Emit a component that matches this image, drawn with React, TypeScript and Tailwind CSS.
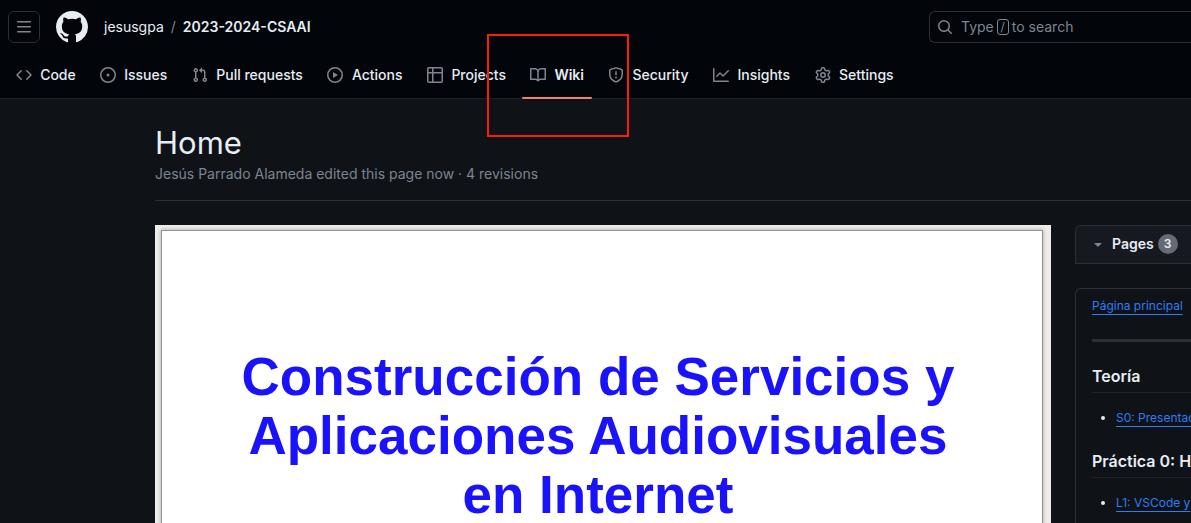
import type { ReactNode } from "react";

const icons = {
  menu: "M1 2.75A.75.75 0 0 1 1.75 2h12.5a.75.75 0 0 1 0 1.5H1.75A.75.75 0 0 1 1 2.75Zm0 5A.75.75 0 0 1 1.75 7h12.5a.75.75 0 0 1 0 1.5H1.75A.75.75 0 0 1 1 7.75ZM1.75 12h12.5a.75.75 0 0 1 0 1.5H1.75a.75.75 0 0 1 0-1.5Z",
  github:
    "M8 0c4.42 0 8 3.58 8 8a8.013 8.013 0 0 1-5.45 7.59c-.4.08-.55-.17-.55-.38 0-.27.01-1.13.01-2.2 0-.75-.25-1.23-.54-1.48 1.78-.2 3.65-.88 3.65-3.95 0-.88-.31-1.59-.82-2.15.08-.2.36-1.02-.08-2.12 0 0-.67-.22-2.2.82-.64-.18-1.32-.27-2-.27-.68 0-1.36.09-2 .27-1.53-1.03-2.2-.82-2.2-.82-.44 1.1-.16 1.92-.08 2.12-.51.56-.82 1.28-.82 2.15 0 3.06 1.86 3.75 3.64 3.95-.23.2-.44.55-.51 1.07-.46.21-1.61.55-2.33-.66-.15-.24-.6-.83-1.23-.82-.67.01-.27.38.01.53.34.19.73.9.82 1.13.16.45.68 1.31 2.69.94 0 .67.01 1.3.01 1.49 0 .21-.15.45-.55.38A7.995 7.995 0 0 1 0 8c0-4.42 3.58-8 8-8Z",
  search:
    "M10.68 11.74a6 6 0 0 1-7.922-8.982 6 6 0 0 1 8.982 7.922l3.04 3.04a.749.749 0 0 1-.326 1.275.749.749 0 0 1-.734-.215ZM11.5 7a4.499 4.499 0 1 0-8.997 0A4.499 4.499 0 0 0 11.5 7Z",
  code: "m11.28 3.22 4.25 4.25a.75.75 0 0 1 0 1.06l-4.25 4.25a.749.749 0 0 1-1.275-.326.749.749 0 0 1 .215-.734L13.94 8l-3.72-3.72a.749.749 0 0 1 .326-1.275.749.749 0 0 1 .734.215Zm-6.56 0a.751.751 0 0 1 1.042.018.751.751 0 0 1 .018 1.042L2.06 8l3.72 3.72a.749.749 0 0 1-.326 1.275.749.749 0 0 1-.734-.215L.47 8.53a.75.75 0 0 1 0-1.06Z",
  issue:
    "M8 9.5a1.5 1.5 0 1 0 0-3 1.5 1.5 0 0 0 0 3ZM8 0a8 8 0 1 1 0 16A8 8 0 0 1 8 0ZM1.5 8a6.5 6.5 0 1 0 13 0 6.5 6.5 0 0 0-13 0Z",
  pull: "M1.5 3.25a2.25 2.25 0 1 1 3 2.122v5.256a2.251 2.251 0 1 1-1.5 0V5.372A2.25 2.25 0 0 1 1.5 3.25Zm5.677-.177L9.573.677A.25.25 0 0 1 10 .854V2.5h1A2.5 2.5 0 0 1 13.5 5v5.628a2.251 2.251 0 1 1-1.5 0V5a1 1 0 0 0-1-1h-1v1.646a.25.25 0 0 1-.427.177L7.177 3.427a.25.25 0 0 1 0-.354ZM3.75 2.5a.75.75 0 1 0 0 1.5.75.75 0 0 0 0-1.5Zm0 9.5a.75.75 0 1 0 0 1.5.75.75 0 0 0 0-1.5Zm8.25.75a.75.75 0 1 0 1.5 0 .75.75 0 0 0-1.5 0Z",
  play: "M8 0a8 8 0 1 1 0 16A8 8 0 0 1 8 0ZM1.5 8a6.5 6.5 0 1 0 13 0 6.5 6.5 0 0 0-13 0Zm4.879-2.773 4.264 2.559a.25.25 0 0 1 0 .428l-4.264 2.559A.25.25 0 0 1 6 10.559V5.442a.25.25 0 0 1 .379-.215Z",
  table:
    "M0 1.75C0 .784.784 0 1.75 0h12.5C15.216 0 16 .784 16 1.75v12.5A1.75 1.75 0 0 1 14.25 16H1.75A1.75 1.75 0 0 1 0 14.25ZM6.5 6.5v8h7.75a.25.25 0 0 0 .25-.25V6.5Zm8-1.5V1.75a.25.25 0 0 0-.25-.25H6.5V5Zm-13 1.5v7.75c0 .138.112.25.25.25H5v-8ZM5 5V1.5H1.75a.25.25 0 0 0-.25.25V5Z",
  book: "M0 1.75A.75.75 0 0 1 .75 1h4.253c1.227 0 2.317.59 3 1.501A3.743 3.743 0 0 1 11.006 1h4.245a.75.75 0 0 1 .75.75v10.5a.75.75 0 0 1-.75.75h-4.507a2.25 2.25 0 0 0-1.591.659l-.622.621a.75.75 0 0 1-1.06 0l-.622-.621A2.25 2.25 0 0 0 5.258 13H.75a.75.75 0 0 1-.75-.75Zm7.251 10.324.004-5.073-.002-2.253A2.25 2.25 0 0 0 5.003 2.5H1.5v9h3.757a3.75 3.75 0 0 1 1.994.574ZM8.755 4.75l-.004 7.322a3.752 3.752 0 0 1 1.992-.572H14.5v-9h-3.495a2.25 2.25 0 0 0-2.25 2.25Z",
  shield:
    "M7.467.133a1.748 1.748 0 0 1 1.066 0l5.25 1.68A1.75 1.75 0 0 1 15 3.48V7c0 1.566-.32 3.182-1.303 4.682-.983 1.498-2.585 2.813-5.032 3.855a1.697 1.697 0 0 1-1.33 0c-2.447-1.042-4.049-2.357-5.032-3.855C1.32 10.182 1 8.566 1 7V3.48a1.75 1.75 0 0 1 1.217-1.667Zm.61 1.429a.25.25 0 0 0-.153 0l-5.25 1.68a.25.25 0 0 0-.174.238V7c0 1.358.275 2.666 1.057 3.86.784 1.194 2.121 2.34 4.366 3.297a.196.196 0 0 0 .154 0c2.245-.956 3.582-2.104 4.366-3.298C13.225 9.666 13.5 8.36 13.5 7V3.48a.251.251 0 0 0-.174-.237l-5.25-1.68ZM8.75 4.75v3a.75.75 0 0 1-1.5 0v-3a.75.75 0 0 1 1.5 0ZM9 10.5a1 1 0 1 1-2 0 1 1 0 0 1 2 0Z",
  graph:
    "M1.5 1.75V13.5h13.75a.75.75 0 0 1 0 1.5H.75a.75.75 0 0 1-.75-.75V1.75a.75.75 0 0 1 1.5 0Zm14.28 2.53-5.25 5.25a.75.75 0 0 1-1.06 0L7 7.06 4.28 9.78a.751.751 0 0 1-1.042-.018.751.751 0 0 1-.018-1.042l3.25-3.25a.75.75 0 0 1 1.06 0L10 7.94l4.72-4.72a.751.751 0 0 1 1.042.018.751.751 0 0 1 .018 1.042Z",
  gear: "M8 0a8.2 8.2 0 0 1 .701.031C9.444.095 9.99.645 10.16 1.29l.288 1.107c.018.066.079.158.212.224.231.114.454.243.668.386.123.082.233.09.299.071l1.103-.303c.644-.176 1.392.021 1.82.63.27.385.506.792.704 1.218.315.675.111 1.422-.364 1.891l-.814.806c-.049.048-.098.147-.088.294.016.257.016.515 0 .772-.01.147.038.246.088.294l.814.806c.475.469.679 1.216.364 1.891a7.977 7.977 0 0 1-.704 1.217c-.428.61-1.176.807-1.82.63l-1.102-.302c-.067-.019-.177-.011-.3.071a5.909 5.909 0 0 1-.668.386c-.133.066-.194.158-.211.224l-.29 1.106c-.168.646-.715 1.196-1.458 1.26a8.006 8.006 0 0 1-1.402 0c-.743-.064-1.289-.614-1.458-1.26l-.289-1.106c-.018-.066-.079-.158-.212-.224a5.738 5.738 0 0 1-.668-.386c-.123-.082-.233-.09-.299-.071l-1.103.303c-.644.176-1.392-.021-1.82-.63a8.12 8.12 0 0 1-.704-1.218c-.315-.675-.111-1.422.363-1.891l.815-.806c.05-.048.098-.147.088-.294a6.214 6.214 0 0 1 0-.772c.01-.147-.038-.246-.088-.294l-.815-.806C.635 6.045.431 5.298.746 4.623a7.92 7.92 0 0 1 .704-1.217c.428-.61 1.176-.807 1.82-.63l1.102.302c.067.019.177.011.3-.071.214-.143.437-.272.668-.386.133-.066.194-.158.211-.224l.29-1.106C6.009.645 6.556.095 7.299.03 7.53.01 7.764 0 8 0Zm-.571 1.525c-.036.003-.108.036-.137.146l-.289 1.105c-.147.561-.549.967-.998 1.189-.173.086-.34.183-.5.29-.417.278-.97.423-1.529.27l-1.103-.303c-.109-.03-.175.016-.195.045-.22.312-.412.644-.573.99-.014.031-.021.11.059.19l.815.806c.411.406.562.957.53 1.456a4.709 4.709 0 0 0 0 .582c.032.499-.119 1.05-.53 1.456l-.815.806c-.081.08-.073.159-.059.19.162.346.353.677.573.989.02.03.085.076.195.046l1.102-.303c.56-.153 1.113-.008 1.53.27.161.107.328.204.501.29.447.222.85.629.997 1.189l.289 1.105c.029.109.101.143.137.146a6.6 6.6 0 0 0 1.142 0c.036-.003.108-.036.137-.146l.289-1.105c.147-.561.549-.967.998-1.189.173-.086.34-.183.5-.29.417-.278.97-.423 1.529-.27l1.103.303c.109.029.175-.016.195-.045.22-.313.411-.644.573-.99.014-.031.021-.11-.059-.19l-.815-.806c-.411-.406-.562-.957-.53-1.456a4.709 4.709 0 0 0 0-.582c-.032-.499.119-1.05.53-1.456l.815-.806c.081-.08.073-.159.059-.19a6.464 6.464 0 0 0-.573-.989c-.02-.03-.085-.076-.195-.046l-1.102.303c-.56.153-1.113.008-1.53-.27a4.44 4.44 0 0 0-.501-.29c-.447-.222-.85-.629-.997-1.189l-.289-1.105c-.029-.11-.101-.143-.137-.146a6.6 6.6 0 0 0-1.142 0ZM11 8a3 3 0 1 1-6 0 3 3 0 0 1 6 0ZM9.5 8a1.5 1.5 0 1 0-3.001.001A1.5 1.5 0 0 0 9.5 8Z",
  triangle:
    "m4.427 7.427 3.396 3.396a.25.25 0 0 0 .354 0l3.396-3.396A.25.25 0 0 0 11.396 7H4.604a.25.25 0 0 0-.177.427Z",
};

type IconName = keyof typeof icons;

function Icon({ name, className }: { name: IconName; className: string }) {
  return (
    <svg viewBox="0 0 16 16" fill="currentColor" aria-hidden="true" className={`shrink-0 ${className}`}>
      <path d={icons[name]} />
    </svg>
  );
}

const tabs: { label: string; icon: IconName }[] = [
  { label: "Code", icon: "code" },
  { label: "Issues", icon: "issue" },
  { label: "Pull requests", icon: "pull" },
  { label: "Actions", icon: "play" },
  { label: "Projects", icon: "table" },
  { label: "Wiki", icon: "book" },
  { label: "Security", icon: "shield" },
  { label: "Insights", icon: "graph" },
  { label: "Settings", icon: "gear" },
];

function Tab({ label, icon, active }: { label: string; icon: IconName; active: boolean }) {
  return (
    <li className="relative flex h-full items-center">
      <a href="#" aria-current={active ? "page" : undefined} className="flex h-8 items-center gap-2 px-2">
        <Icon name={icon} className="size-4 text-[#7d8590]" />
        <span
          data-label={label}
          className={`text-center after:invisible after:block after:h-0 after:overflow-hidden after:font-semibold after:content-[attr(data-label)] ${active ? "font-semibold" : "font-medium"}`}
        >
          {label}
        </span>
      </a>
      {active && (
        <>
          <span className="absolute inset-x-0 bottom-0 h-0.5 rounded-full bg-[#f78166]" />
          <span className="pointer-events-none absolute -top-[17px] -right-[37px] -bottom-[38px] -left-[35px] z-10 border-2 border-[#fb1d0b]" />
        </>
      )}
    </li>
  );
}

function SidebarSection({ title, children }: { title: string; children: ReactNode }) {
  return (
    <section className="mt-[22px]">
      <h2 className="border-b border-[#1e2329] pb-1 text-base leading-6 font-semibold">{title}</h2>
      <ul className="mt-4 list-disc pl-6 text-xs leading-[18px]">
        <li>
          <a href="#" className="text-[#2f7cf6] underline underline-offset-4">
            {children}
          </a>
        </li>
      </ul>
    </section>
  );
}

export default function App() {
  return (
    <div className="h-screen overflow-hidden bg-[#0f1217] font-[Inter,sans-serif] text-sm text-[#e6edf3]">
      <header className="border-b border-[#1e2227] bg-[#02050a] pt-[11px]">
        <div className="flex items-center pl-2">
          <button
            type="button"
            aria-label="Open menu"
            className="flex size-8 items-center justify-center rounded-md border border-[#2b3036] text-[#7d8590]"
          >
            <Icon name="menu" className="size-4" />
          </button>
          <a href="#" aria-label="Homepage" className="ml-4">
            <Icon name="github" className="size-8" />
          </a>
          <nav aria-label="Breadcrumb" className="ml-4 flex items-center gap-[7px]">
            <a href="#">jesusgpa</a>
            <span className="text-[#7d8590]">/</span>
            <a href="#" className="font-semibold">
              2023-2024-CSAAI
            </a>
          </nav>
          <button
            type="button"
            className="ml-auto flex h-8 w-[262px] items-center rounded-l-md border border-r-0 border-[#2b3036] pl-[7px] text-[#7d8590]"
          >
            <Icon name="search" className="size-4" />
            <span className="ml-2 flex items-center gap-[3px]">
              Type
              <kbd className="flex h-4 w-3 items-center justify-center rounded-[3px] border border-[#7d8590] font-[Inter,sans-serif] text-xs">
                /
              </kbd>
              to search
            </span>
          </button>
        </div>
        <nav aria-label="Repository" className="mt-2 -mb-px h-12">
          <ul className="flex h-full gap-2 pl-2">
            {tabs.map((tab) => (
              <Tab key={tab.label} label={tab.label} icon={tab.icon} active={tab.label === "Wiki"} />
            ))}
          </ul>
        </nav>
      </header>

      <main className="pt-6 pl-[155px]">
        <div className="border-b border-[#2b3036] pb-4">
          <h1 className="text-[31px] leading-10">Home</h1>
          <p className="leading-[21px] text-[#7d8590]">Jesús Parrado Alameda edited this page now · 4 revisions</p>
        </div>

        <div className="mt-6 flex gap-6">
          <article className="min-w-0 flex-1 bg-[#efedea] pt-[5px] pr-2 pl-1.5">
            <div className="h-[600px] border border-[#8f9296] bg-white pt-[116px] pr-16 pl-14 text-center font-['Liberation_Sans',Arial,sans-serif] text-[53px] leading-[59px] font-bold text-[#1a12fb] shadow-[0_0_4px_#77777799]">
              <p>
                Construcción de Servicios y
                <br />
                Aplicaciones Audiovisuales
                <br />
                en Internet
              </p>
            </div>
          </article>

          <aside className="w-[116px] shrink-0 overflow-hidden whitespace-nowrap">
            <button
              type="button"
              aria-expanded="true"
              className="flex h-[39px] w-full items-center rounded-tl-md border border-r-0 border-[#2b3036] bg-[#161a20] pb-0.5 pl-3.5 font-semibold"
            >
              <Icon name="triangle" className="size-4 text-[#7d8590]" />
              <span className="ml-1.5">Pages</span>
              <span className="ml-1 flex h-5 min-w-5 items-center justify-center rounded-full bg-[#646b75] text-xs">3</span>
            </button>
            <div className="mt-6 h-[400px] rounded-tl-md border border-r-0 border-[#2b3036] pt-1.5 pl-4">
              <a href="#" className="text-xs leading-[18px] text-[#2f7cf6] underline underline-offset-4">
                Página principal
              </a>
              <hr className="mt-6 h-[3px] border-0 bg-[#2b3036]" />
              <SidebarSection title="Teoría">S0: Presentación</SidebarSection>
              <SidebarSection title="Práctica 0: Herramientas">L1: VSCode y</SidebarSection>
            </div>
          </aside>
        </div>
      </main>
    </div>
  );
}
